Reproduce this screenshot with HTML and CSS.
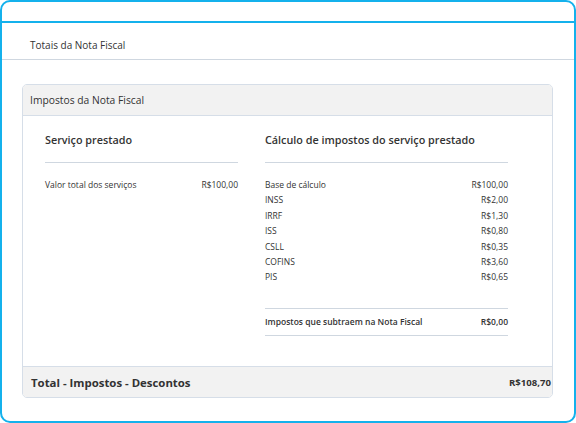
FILE: index.html
```html
<!DOCTYPE html>
<html lang="pt-BR">
<head>
<meta charset="utf-8">
<link rel="stylesheet" href="styles.css">
</head>
<body>
<div class="frame">
  <div class="topbar"></div>
  <div class="section-title">Totais da Nota Fiscal</div>
  <div class="card">
    <div class="card-header">Impostos da Nota Fiscal</div>
    <div class="card-body">
      <div class="col col-left">
        <div class="col-title">Serviço prestado</div>
        <div class="rows">
          <div class="row"><span>Valor total dos serviços</span><span>R$100,00</span></div>
        </div>
      </div>
      <div class="col col-right">
        <div class="col-title">Cálculo de impostos do serviço prestado</div>
        <div class="rows">
          <div class="row"><span>Base de cálculo</span><span>R$100,00</span></div>
          <div class="row"><span>INSS</span><span>R$2,00</span></div>
          <div class="row"><span>IRRF</span><span>R$1,30</span></div>
          <div class="row"><span>ISS</span><span>R$0,80</span></div>
          <div class="row"><span>CSLL</span><span>R$0,35</span></div>
          <div class="row"><span>COFINS</span><span>R$3,60</span></div>
          <div class="row"><span>PIS</span><span>R$0,65</span></div>
        </div>
        <div class="row subtotal"><span>Impostos que subtraem na Nota Fiscal</span><span>R$0,00</span></div>
      </div>
    </div>
    <div class="card-footer"><span>Total - Impostos - Descontos</span><span>R$108,70</span></div>
  </div>
</div>
</body>
</html>
```
FILE: styles.css
```css
* { box-sizing: border-box; }
html, body { margin: 0; padding: 0; background: #fff; }
body {
  font-family: "Open Sans", "Noto Sans", sans-serif;
  color: #333;
}
.frame {
  width: 576px;
  height: 423px;
  border: 2px solid #14b1ec;
  border-radius: 10px;
  overflow: hidden;
}
.topbar {
  height: 21px;
  border-bottom: 2px solid #14b1ec;
}
.section-title {
  height: 37px;
  padding: 15px 0 0 28px;
  font-size: 10px;
  line-height: 14px;
  border-bottom: 1px solid #cfd7e0;
}
.card {
  margin: 24px 0 0 20px;
  width: 531px;
  border: 1px solid #d6dee8;
  border-radius: 5px;
  overflow: hidden;
}
.card-header {
  height: 31px;
  background: #f2f2f2;
  border-bottom: 1px solid #d6dee8;
  padding: 8px 0 0 7px;
  font-size: 10.3px;
  line-height: 14px;
}
.card-body {
  display: flex;
  gap: 27px;
  padding: 17px 0 0 22px;
  height: 250px;
}
.col-left { width: 193px; }
.col-right { width: 243px; }
.col-title {
  font-weight: 600;
  font-size: 10.8px;
  line-height: 14px;
  padding-bottom: 15px;
  border-bottom: 1px solid #cfd7e0;
}
.rows { padding-top: 14px; }
.row {
  display: flex;
  justify-content: space-between;
  font-size: 8.5px;
  line-height: 15.4px;
}
.subtotal {
  margin-top: 23px;
  padding: 6px 0;
  line-height: 14px;
  font-weight: 600;
  border-top: 1px solid #cfd7e0;
  border-bottom: 1px solid #cfd7e0;
}
.card-footer {
  height: 31px;
  background: #f2f2f2;
  border-top: 1px solid #d6dee8;
  display: flex;
  justify-content: space-between;
  align-items: center;
  padding: 0 1px 0 8px;
  font-weight: 700;
  font-size: 11.4px;
}
.card-footer span:last-child { font-size: 9.6px; }
```
